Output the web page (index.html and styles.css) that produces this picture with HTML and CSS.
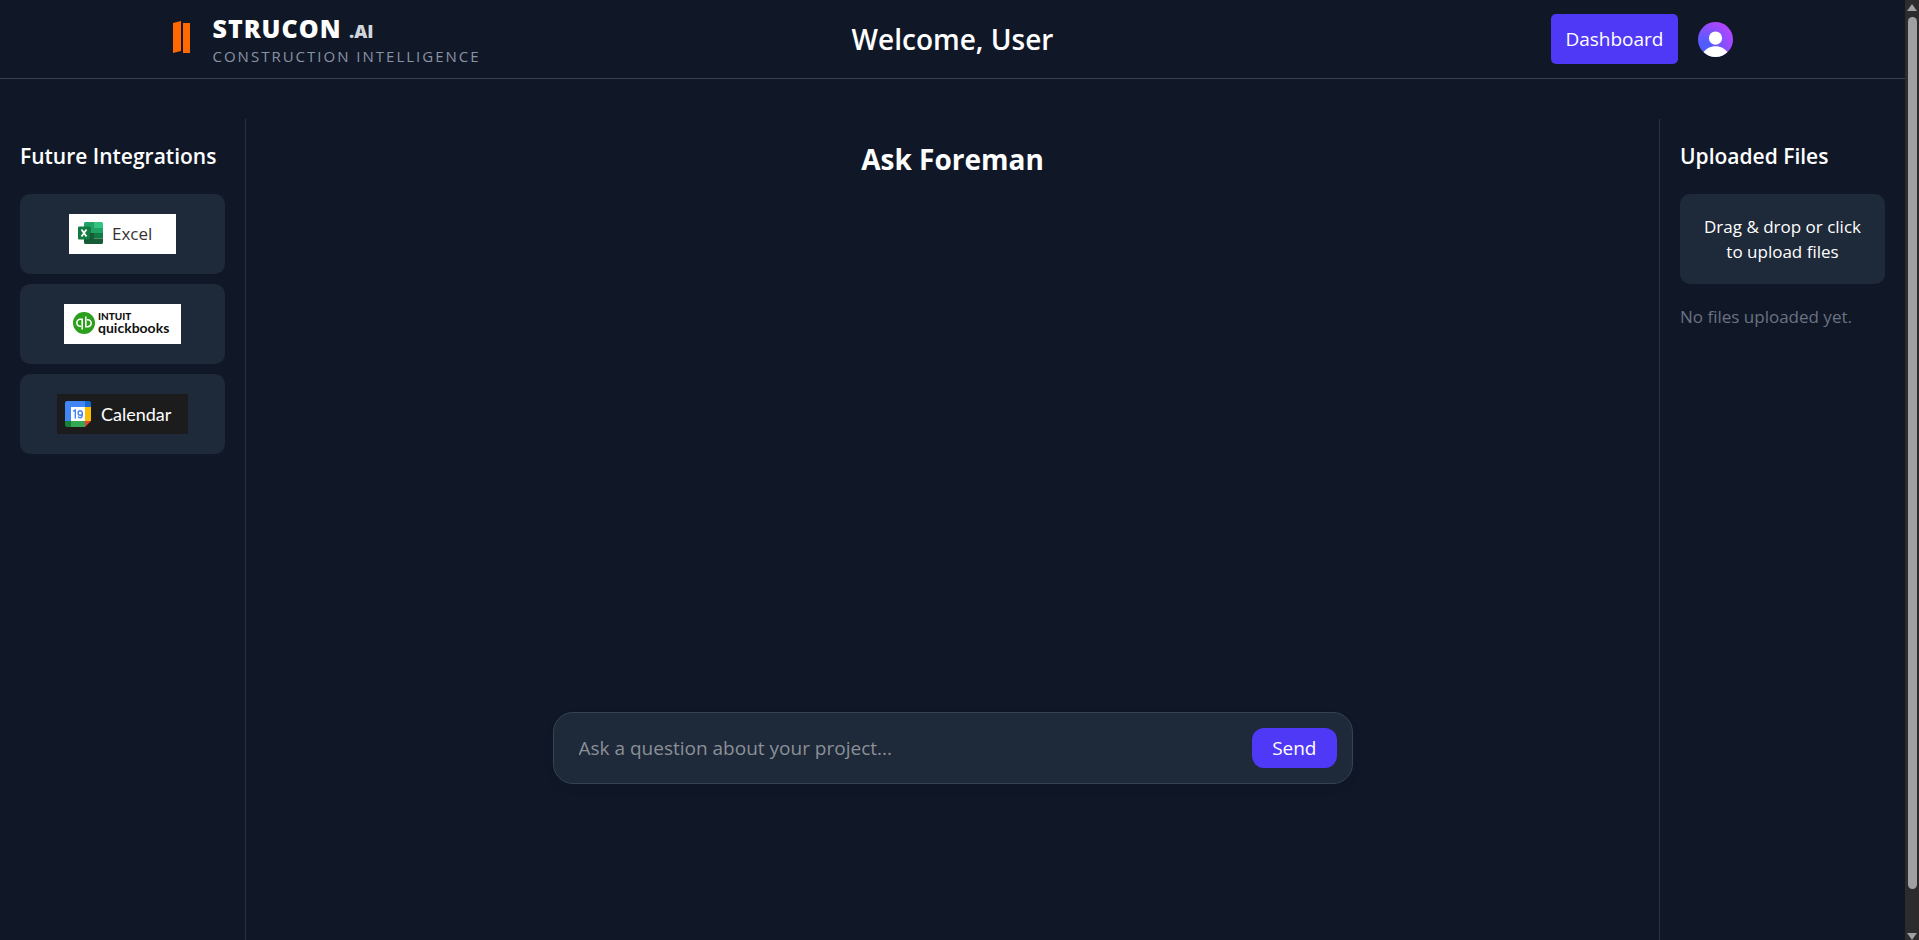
FILE: index.html
```html
<!DOCTYPE html>
<html lang="en">
<head>
<meta charset="utf-8">
<meta name="viewport" content="width=device-width, initial-scale=1">
<title>Strucon.ai</title>
<link rel="stylesheet" href="styles.css">
</head>
<body>
<div class="page">
  <header class="site-header">
    <div class="header-inner">
      <a class="brand" href="#">
        <svg class="brand-mark" viewBox="0 0 20 34" aria-hidden="true">
          <path fill="#ff6900" d="M0 3 8 1v30l-8 2z"/>
          <path fill="#ff6900" d="M10 3h7v30h-7z"/>
        </svg>
        <span class="brand-text">
          <span class="brand-name">STRUCON <span class="brand-suffix">.AI</span></span>
          <span class="brand-tagline">CONSTRUCTION INTELLIGENCE</span>
        </span>
      </a>
      <h1 class="welcome">Welcome, User</h1>
      <div class="account">
        <button class="dashboard-button" type="button">Dashboard</button>
        <button class="avatar" type="button" aria-label="Account">
          <svg viewBox="0 0 36 36" aria-hidden="true">
            <circle cx="18" cy="16.500" r="6.800" fill="#fff"/>
            <path fill="#fff" d="M5 32C8 27.500 12.500 25 18 25s10 2.500 13 7v4H5z"/>
          </svg>
        </button>
      </div>
    </div>
  </header>

  <div class="workspace">
    <aside class="panel panel-left">
      <h2 class="panel-title">Future Integrations</h2>
      <ul class="integrations">
        <li class="integration">
          <span class="logo logo-excel">
            <svg class="icon-excel" viewBox="0 0 25 22" aria-hidden="true">
              <path fill="#21a366" d="M7.500 0H16v6H6V1.500Q6 0 7.500 0z"/>
              <path fill="#33c481" d="M16 0h7.500Q25 0 25 1.500V6h-9z"/>
              <path fill="#21a366" d="M16 6h9v5h-9z"/>
              <path fill="#107c41" d="M16 11h9v5.500h-9z"/>
              <path fill="#21a366" d="M6 6h10v5H6z"/>
              <path fill="#185c37" d="M6 11h10v5.500h9v4q0 1.500-1.500 1.500h-16Q6 22 6 20.500z"/>
              <path fill="#0b4f2b" d="M6 5h7v13.500H6z" opacity=".5"/>
              <rect y="4.500" width="12" height="13" rx="1" fill="#107c41"/>
              <path d="M3.500 7.500 8.500 14.500M8.500 7.500 3.500 14.500" stroke="#fff" stroke-width="1.800"/>
            </svg>
            <span>Excel</span>
          </span>
        </li>
        <li class="integration">
          <span class="logo logo-quickbooks">
            <svg class="icon-quickbooks" viewBox="0 0 22 22" aria-hidden="true">
              <circle cx="11" cy="11" r="11" fill="#2ca01c"/>
              <path fill="none" stroke="#fff" stroke-width="1.600" d="M9.200 17.500V7.300H7.300a3.500 3.500 0 0 0 0 7H8M12.800 4.500v10.200h1.900a3.500 3.500 0 0 0 0-7H14"/>
            </svg>
            <span class="quickbooks-text">
              <span class="quickbooks-maker">INTUIT</span>
              <span class="quickbooks-name">quickbooks</span>
            </span>
          </span>
        </li>
        <li class="integration">
          <span class="logo logo-calendar">
            <svg class="icon-calendar" viewBox="0 0 26 26" aria-hidden="true">
              <path fill="#4285f4" d="M2 0h18v6H6v14H0V2q0-2 2-2z"/>
              <path fill="#1967d2" d="M20 0h4q2 0 2 2v4h-6z"/>
              <path fill="#fbbc04" d="M20 6h6v14h-6z"/>
              <path fill="#34a853" d="M6 20h14v6H6z"/>
              <path fill="#188038" d="M0 20h6v6H2q-2 0-2-2z"/>
              <path fill="#ea4335" d="M20 20h6l-6 6z"/>
              <path fill="#fff" d="M6 6h14v14H6z"/>
              <path fill="none" stroke="#4285f4" stroke-width="1.400" d="M8 10.300 10.300 9v8.500M17.300 12.200q0 2-2.100 2t-2.100-2.200q0-2.300 2.100-2.300t2.200 3q0 4-2.300 4-1.400 0-2-1.200"/>
            </svg>
            <span>Calendar</span>
          </span>
        </li>
      </ul>
    </aside>

    <main class="chat">
      <h2 class="chat-title">Ask Foreman</h2>
      <div class="messages" aria-live="polite"></div>
      <form class="composer">
        <input class="composer-input" type="text" aria-label="Question" placeholder="Ask a question about your project...">
        <button class="send-button" type="submit">Send</button>
      </form>
    </main>

    <aside class="panel panel-right">
      <h2 class="panel-title">Uploaded Files</h2>
      <button class="dropzone" type="button">Drag &amp; drop or click to upload files</button>
      <p class="empty-note">No files uploaded yet.</p>
    </aside>
  </div>
</div>

<div class="scrollbar" aria-hidden="true">
  <span class="scroll-arrow scroll-up"></span>
  <span class="scroll-thumb"></span>
  <span class="scroll-arrow scroll-down"></span>
</div>
</body>
</html>
```

FILE: styles.css
```css
* {
  box-sizing: border-box;
}

body {
  margin: 0;
  min-height: 100vh;
  display: flex;
  background: #101828;
  color: #fff;
  font-family: "Segoe UI", "Open Sans", "Noto Sans", sans-serif;
  font-size: 18px;
}

button,
input {
  font: inherit;
  color: inherit;
  border: 0;
}

button {
  cursor: pointer;
}

h1,
h2,
p,
ul {
  margin: 0;
  padding: 0;
}

.page {
  flex: 1;
  min-width: 0;
  display: flex;
  flex-direction: column;
}

/* Header */
.site-header {
  border-bottom: 1px solid #364153;
}

.header-inner {
  max-width: 1600px;
  margin: 0 auto;
  padding: 11px 20px;
  display: grid;
  grid-template-columns: 1fr auto 1fr;
  align-items: center;
}

.brand {
  display: flex;
  align-items: center;
  gap: 20px;
  color: inherit;
  text-decoration: none;
}

.brand-mark {
  width: 20px;
  height: 34px;
  margin-bottom: 4px;
}

.brand-text {
  display: flex;
  flex-direction: column;
}

.brand-name {
  font-size: 25px;
  line-height: 34px;
  font-weight: 800;
  letter-spacing: 1px;
}

.brand-suffix {
  font-size: 18px;
  line-height: 1;
  letter-spacing: 0;
  color: #d1d5dc;
}

.brand-tagline {
  font-size: 15px;
  line-height: 22px;
  letter-spacing: 2px;
  color: #8a93a3;
}

.welcome {
  font-size: 28px;
  line-height: 40px;
  font-weight: 600;
}

.account {
  display: flex;
  justify-content: flex-end;
  align-items: center;
  gap: 20px;
}

.dashboard-button {
  padding: 10px 14px;
  border-radius: 5px;
  background: #4f39f6;
  font-size: 19px;
  line-height: 30px;
}

.avatar {
  width: 35px;
  height: 35px;
  padding: 0;
  border-radius: 50%;
  overflow: hidden;
  background: radial-gradient(circle at 20% 75%, #4f5dff 15%, #ad46ff 75%);
}

.avatar svg {
  display: block;
  width: 100%;
}

/* Three-column workspace */
.workspace {
  flex: 1;
  margin-top: 40px;
  display: grid;
  grid-template-columns: 246px 1fr 246px;
}

.panel {
  padding: 20px;
}

.panel-left {
  border-right: 1px solid #283243;
}

.panel-right {
  border-left: 1px solid #283243;
}

.panel-title {
  margin-bottom: 20px;
  font-size: 21px;
  line-height: 35px;
  font-weight: 600;
  white-space: nowrap;
}

.integrations {
  display: grid;
  gap: 10px;
  list-style: none;
}

.integration {
  padding: 20px;
  display: flex;
  justify-content: center;
  border-radius: 10px;
  background: #1e2939;
}

.logo {
  height: 40px;
  display: flex;
  align-items: center;
}

.logo-excel {
  width: 107px;
  padding-left: 9px;
  padding-bottom: 2px;
  gap: 9px;
  background: #fff;
  color: #333;
  font-size: 17px;
  font-weight: 500;
}

.icon-excel {
  width: 25px;
  height: 22px;
}

.logo-quickbooks {
  width: 117px;
  padding-left: 9px;
  padding-bottom: 3px;
  gap: 3px;
  background: #fff;
  color: #111;
}

.icon-quickbooks {
  width: 22px;
  height: 22px;
}

.quickbooks-text {
  display: flex;
  flex-direction: column;
  font-family: Lato, sans-serif;
  font-weight: 700;
}

.quickbooks-maker {
  font-size: 10px;
  line-height: 10px;
  font-weight: 900;
}

.quickbooks-name {
  font-size: 14px;
  line-height: 14px;
}

.logo-calendar {
  width: 131px;
  padding-left: 8px;
  gap: 10px;
  background: #1c1c1c;
  font-family: Lato, sans-serif;
  font-size: 18px;
}

.icon-calendar {
  width: 26px;
  height: 26px;
}

/* Chat */
.chat {
  padding: 20px 20px 156px;
  display: flex;
  flex-direction: column;
  align-items: center;
}

.chat-title {
  font-size: 28px;
  line-height: 40px;
  font-weight: 700;
}

.messages {
  flex: 1;
}

.composer {
  width: 100%;
  max-width: 800px;
  padding: 15px;
  display: flex;
  gap: 10px;
  border: 1px solid #364153;
  border-radius: 20px;
  background: #1e2939;
  box-shadow: 0 4px 8px rgba(0, 0, 0, 0.1);
}

.composer-input {
  flex: 1;
  min-width: 0;
  padding: 0 10px;
  background: transparent;
  outline: 0;
  font-size: 19px;
}

.composer-input::placeholder {
  color: #8b9097;
}

.send-button {
  padding: 5px 20px;
  border-radius: 12px;
  background: #4f39f6;
  font-size: 19px;
  line-height: 30px;
}

/* Uploads */
.dropzone {
  width: 100%;
  padding: 20px;
  border-radius: 10px;
  background: #1e2939;
  font-size: 17px;
  line-height: 25px;
}

.empty-note {
  margin-top: 20px;
  font-size: 17px;
  line-height: 26px;
  color: #6a7282;
}

/* Scrollbar */
.scrollbar {
  width: 14px;
  height: 100vh;
  padding-top: 4px;
  display: flex;
  flex-direction: column;
  align-items: center;
  background: #2c2c2c;
}

.scroll-arrow {
  width: 10px;
  height: 7px;
  background: #a0a0a0;
}

.scroll-up {
  clip-path: polygon(50% 0, 100% 100%, 0 100%);
}

.scroll-down {
  clip-path: polygon(0 0, 100% 0, 50% 100%);
}

.scroll-thumb {
  flex: 1;
  width: 9px;
  margin: 6px 0 44px;
  border-radius: 5px;
  background: #a0a0a0;
}
```
